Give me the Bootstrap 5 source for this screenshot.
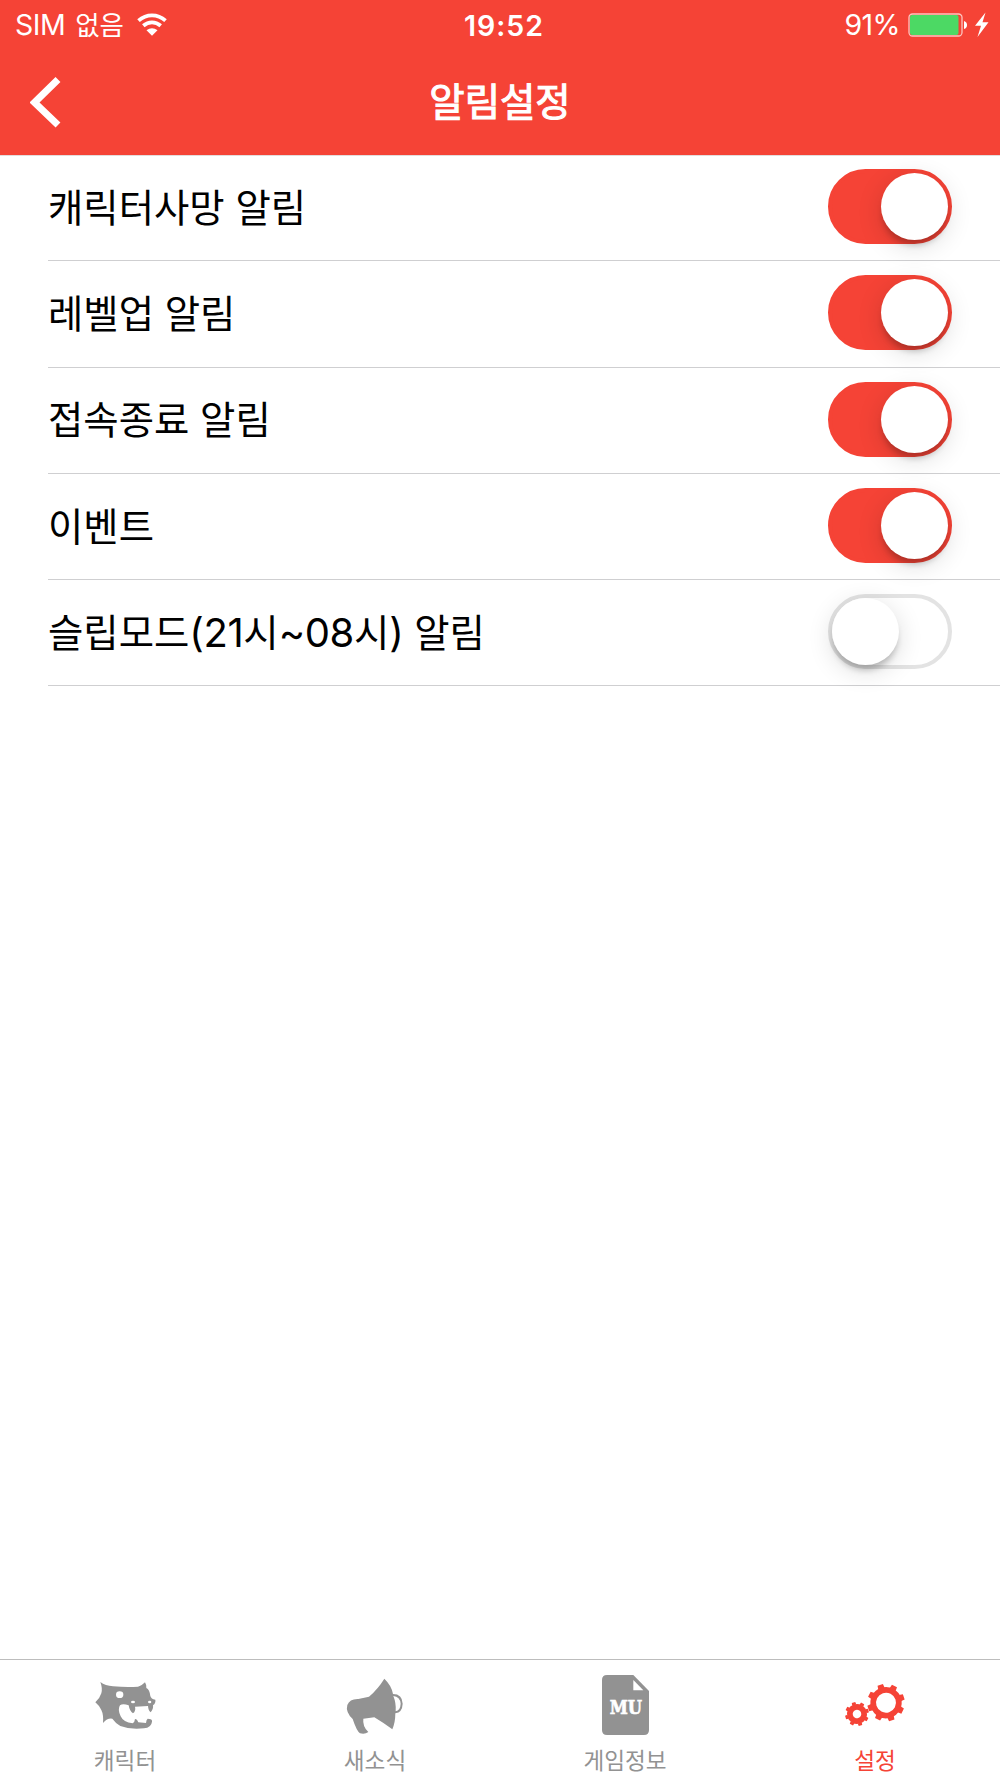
<!DOCTYPE html>
<html lang="ko">
<head>
<meta charset="utf-8">
<meta name="viewport" content="width=device-width, initial-scale=1">
<title>알림설정</title>
<link href="https://cdn.jsdelivr.net/npm/bootstrap@5.3.0/dist/css/bootstrap.min.css" rel="stylesheet">
<style>
:root { --app-red: #f54336; --app-grey: #929292; }
body { font-family: Inter, "Noto Sans CJK KR", sans-serif; color: #000; background: #fff; }
.app-head { background: var(--app-red); color: #fff; height: 155px; box-shadow: 0 1px 0 #e3dcdc; }
.status-bar { height: 50px; padding: 0 10px 0 15px; font-size: 28.5px; line-height: 50px; }
.status-bar .side { flex: 1 1 0; }
.carrier { letter-spacing: -.5px; }
.carrier-ko { font-size: 26.5px; margin-left: 10px; }
.wifi { margin-left: 13px; margin-top: -2px; }
.clock { font-weight: 600; letter-spacing: 1px; margin-left: 3px; padding-top: 1px; }
.charge { letter-spacing: -.6px; }
.title-bar { height: 103px; padding-left: 30px; }
.title-bar .side { flex: 1 1 0; }
.title-bar h1 { font-size: 38.4px; font-weight: 400; line-height: 104px; -webkit-text-stroke: 1.1px #fff; margin-left: -30px; }
.setting-row { height: 106.25px; margin-left: 48px; padding: 0 48px 0 0; border-bottom: 1px solid #cfcfd1; }
.setting-row label { font-size: 38.4px; line-height: 1; padding-top: 1px; }
.setting-row .num { font-size: 40px; letter-spacing: -.4px; }
.setting-row .form-check-input { width: 124px; height: 75px; border: 4px solid #e3e3e3; border-radius: 38px; background: #fff none; margin: 0 0 2px; padding: 0; float: none; }
.setting-row .form-check-input:checked { background: var(--app-red) none; border-color: var(--app-red); }
.setting-row .form-check-input::before { content: ""; display: block; width: 67px; height: 67px; border-radius: 50%; background: #fff; box-shadow: 0 7px 6px -2px rgba(0,0,0,.22), 0 6px 26px rgba(0,0,0,.14); }
.setting-row .form-check-input:checked::before { margin-left: 48.5px; }
.tab-bar { height: 119px; border-top: 1px solid #bdbdbd; }
.tab-bar .nav-link { color: var(--app-grey); padding: 2px 0 0; font-size: 22.6px; line-height: 32px; }
.tab-bar .nav-link.active { color: var(--app-red); }
.tab-bar svg { width: 110px; height: 77px; display: block; }
.tab-bar span { margin-top: 6px; }
</style>
</head>
<body>
<div class="d-flex flex-column vh-100 overflow-hidden">
  <header class="app-head flex-shrink-0">
    <div class="status-bar d-flex align-items-center">
      <div class="side d-flex align-items-center">
        <span class="carrier">SIM</span><span class="carrier-ko">없음</span>
        <svg class="wifi" width="30" height="23" viewBox="0 0 30 23" fill="none" stroke="#fff" stroke-width="3.800"><path d="M1.500 7.600C9.500 .600 20.500 .600 28.500 7.600M6.300 12.700C11.500 8.200 18.500 8.200 23.700 12.700"/><path d="M15 22.800L9.500 17.300C13 14.400 17 14.400 20.500 17.300Z" fill="#fff" stroke="none"/></svg>
      </div>
      <div class="clock">19:52</div>
      <div class="side d-flex align-items-center justify-content-end">
        <span class="charge">91%</span>
        <svg class="ms-2" width="82" height="26" viewBox="0 0 82 26"><rect x="1" y="2" width="53" height="22" rx="3.500" fill="none" stroke="#fcc5c0" stroke-width="1.300"/><rect x="2" y="3" width="48.500" height="20" rx="2" fill="#4cd964"/><path d="M56 9Q59 10 59 13Q59 16 56 17Z" fill="#fff"/><path d="M77.500 .500L67 13.800H73L69.500 25L80.500 10.200H74.500Z" fill="#fff"/></svg>
      </div>
    </div>
    <nav class="title-bar d-flex align-items-center">
      <a class="side" href="#" aria-label="뒤로"><svg class="d-block" width="31" height="52" viewBox="0 0 31 52"><path d="M28 3.500L4.500 26.500L28 49" fill="none" stroke="#fff" stroke-width="7"/></svg></a>
      <h1 class="mb-0">알림설정</h1>
      <div class="side"></div>
    </nav>
  </header>

  <main class="flex-grow-1">
    <div class="setting-row d-flex align-items-center justify-content-between form-switch">
      <label for="s1">캐릭터사망 알림</label><input class="form-check-input" type="checkbox" role="switch" id="s1" checked>
    </div>
    <div class="setting-row d-flex align-items-center justify-content-between form-switch">
      <label for="s2">레벨업 알림</label><input class="form-check-input" type="checkbox" role="switch" id="s2" checked>
    </div>
    <div class="setting-row d-flex align-items-center justify-content-between form-switch">
      <label for="s3">접속종료 알림</label><input class="form-check-input" type="checkbox" role="switch" id="s3" checked>
    </div>
    <div class="setting-row d-flex align-items-center justify-content-between form-switch">
      <label for="s4">이벤트</label><input class="form-check-input" type="checkbox" role="switch" id="s4" checked>
    </div>
    <div class="setting-row d-flex align-items-center justify-content-between form-switch">
      <label for="s5">슬립모드<span class="num">(21</span>시<span class="num">~08</span>시<span class="num">)</span> 알림</label><input class="form-check-input" type="checkbox" role="switch" id="s5">
    </div>
  </main>

  <nav class="tab-bar nav nav-fill flex-nowrap flex-shrink-0">
    <a class="nav-link col-3 d-flex flex-column align-items-center" href="#">
      <svg viewBox="0 36 330 231" fill="currentColor"><path d="M91 96Q106 107 129 109Q172 113 204 110Q216 107 225 97Q230 105 229 114Q239 119 241 138Q243 147 256 149Q258 159 249 166Q251 177 242 187Q235 182 234 168L195 170Q198 183 189 190Q179 184 176 166Q158 159 150 166Q142 178 152 199Q160 217 188 220Q194 217 195 207Q201 206 205 217L228 219Q229 209 233 206L238 207Q247 207 246 215Q244 233 222 235Q183 240 151 228Q137 220 127 206Q113 203 99 219Q101 194 94 180Q88 167 76 157Q90 144 94 130Q98 114 91 96Z"/><ellipse cx="149" cy="134" rx="11" ry="10" fill="#fff"/><ellipse cx="189" cy="156" rx="6" ry="4" fill="#fff"/><ellipse cx="239" cy="156" rx="5" ry="4" fill="#fff"/></svg>
      <span>캐릭터</span>
    </a>
    <a class="nav-link col-3 d-flex flex-column align-items-center" href="#">
      <svg viewBox="0 36 330 231" fill="currentColor"><path d="M193 86Q215 107 219 132Q247 132 248 161Q247 187 226 190Q226 217 217 238Q193 220 163 202L130 206Q127 229 145 246Q135 254 120 250Q110 243 98 207Q76 186 82 165Q89 146 115 147L147 140Q174 117 193 86ZM220 138Q229 160 227 184Q241 181 242 161Q240 140 220 138Z" fill-rule="evenodd"/></svg>
      <span>새소식</span>
    </a>
    <a class="nav-link col-3 d-flex flex-column align-items-center" href="#">
      <svg viewBox="0 36 330 231" fill="currentColor"><path d="M111 75H190L237 123V240Q237 255 222 255H111Q96 255 96 240V90Q96 75 111 75Z"/><path d="M190 90V121H220Z" fill="#fff"/><text x="119" y="192" textLength="97" lengthAdjust="spacingAndGlyphs" font-family="DejaVu Serif" font-weight="700" font-size="55" fill="#fff" stroke="#fff" stroke-width="2">MU</text></svg>
      <span>게임정보</span>
    </a>
    <a class="nav-link active col-3 d-flex flex-column align-items-center" href="#" aria-current="page">
      <svg viewBox="0 36 330 231" fill="currentColor">
        <defs><g id="teeth"><path id="pair" d="M-10 -44L-8.500 -56H8.500L10 -44ZM-10 44L-8.500 56H8.500L10 44Z"/><use href="#pair" transform="rotate(45)"/><use href="#pair" transform="rotate(90)"/><use href="#pair" transform="rotate(135)"/></g></defs>
        <g transform="translate(198 158) rotate(-18)"><circle r="38.500" fill="none" stroke="currentColor" stroke-width="17"/><use href="#teeth"/></g>
        <g transform="translate(111 192) rotate(-17) scale(.64)"><circle r="33.500" fill="none" stroke="currentColor" stroke-width="27"/><use href="#teeth"/></g>
      </svg>
      <span>설정</span>
    </a>
  </nav>
</div>
<script src="https://cdn.jsdelivr.net/npm/bootstrap@5.3.0/dist/js/bootstrap.bundle.min.js"></script>
</body>
</html>
